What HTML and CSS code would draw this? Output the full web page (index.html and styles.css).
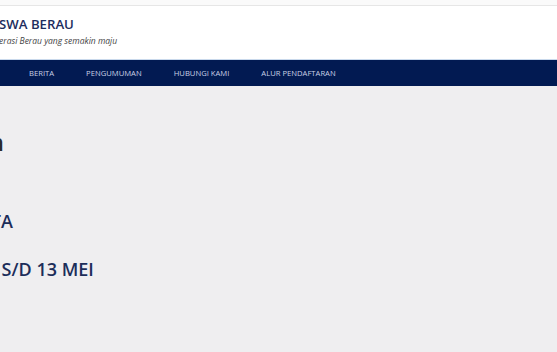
FILE: index.html
```html
<!DOCTYPE html>
<html>
<head>
    <title>Beasiswa Berau</title>
    <link rel="stylesheet" href="styles.css">
</head>
<body>
<div class="topbar"></div>
<div class="header">
    <div class="brand">
        <div class="site-title">BEASISWA BERAU</div>
        <div class="site-desc">Beasiswa untuk generasi Berau yang semakin maju</div>
    </div>
</div>
<div class="nav">
    <a href="#" class="nav-item">BERITA</a>
    <a href="#" class="nav-item">PENGUMUMAN</a>
    <a href="#" class="nav-item">HUBUNGI KAMI</a>
    <a href="#" class="nav-item">ALUR PENDAFTARAN</a>
</div>
<div class="main">
    <h1 class="page-title">Selamat Datang di Pendaftaran</h1>
    <h2 class="notice notice-first">PENDAFTARAN BEASISWA KUOTA</h2>
    <h2 class="notice notice-second">DIBUKA TANGGAL 6 S/D 13 MEI</h2>
</div>
</body>
</html>
```

FILE: styles.css
```css
body {
    margin: 0;
    overflow: hidden;
    font-family: "Open Sans", "Noto Sans", sans-serif;
    background-color: #efeef0;
}

.topbar {
    height: 5px;
    background-color: #fafafa;
    border-bottom: 1px solid #e6e6e6;
}

.header {
    height: 53px;
    background-color: #ffffff;
    overflow: hidden;
}

.brand {
    padding-top: 9px;
    white-space: nowrap;
}

.site-title {
    margin-left: -37px;
    font-size: 13.2px;
    font-weight: 600;
    color: #1d2d5e;
    line-height: 18px;
}

.site-desc {
    margin-left: -75px;
    font-size: 8.5px;
    font-style: italic;
    color: #444;
    line-height: 12px;
    margin-top: 2px;
}

.nav {
    display: flex;
    height: 26px;
    align-items: center;
    padding-left: 13px;
    background-color: #021a52;
    border-top: 1px solid #c9d9ec;
}

.nav-item {
    padding: 0 16px;
    font-size: 7.65px;
    color: #c9d1e6;
    text-decoration: none;
}

.main {
    padding-top: 36px;
    white-space: nowrap;
}

.page-title {
    margin: 0;
    margin-left: -358px;
    font-size: 24px;
    font-weight: 600;
    color: #2b2b2b;
    line-height: 40px;
}

.notice {
    margin: 0;
    font-size: 18px;
    font-weight: 600;
    color: #1c2d5a;
    line-height: 26px;
}

.notice-first {
    margin-left: -275px;
    margin-top: 46px;
}

.notice-second {
    margin-left: -174px;
    margin-top: 22px;
}
```
